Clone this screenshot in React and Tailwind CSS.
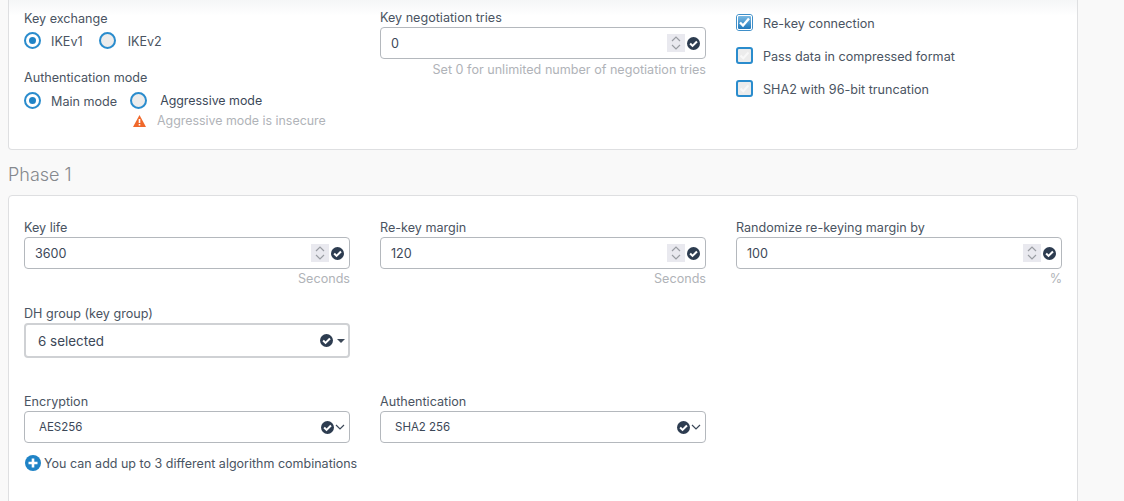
const labelCls = 'block text-[12.6px] leading-[18px] text-[#4a5462]';
const optionCls = 'translate-y-[1px] text-[12.6px] leading-4 text-[#4a5462]';
const hintCls = 'text-right text-[12.6px] leading-4 text-[#b0b3b8]';

function CheckBadge() {
  return (
    <svg width="13" height="13" viewBox="0 0 12 12" className="shrink-0">
      <circle cx="6" cy="6" r="6" fill="#2d3c50" />
      <path d="M2.9 6 5.1 8.2 9.2 4.1" fill="none" stroke="#fff" strokeWidth="1.9" />
    </svg>
  );
}

function Spinner() {
  return (
    <span className="flex h-[18px] w-[18px] items-center justify-center bg-[#e9e9ef]">
      <svg width="12" height="16" viewBox="0 0 12 16" fill="none" stroke="#9a9da3" strokeWidth="1.2">
        <path d="M2 6 6 2l4 4" />
        <path d="M2 10l4 4 4-4" />
      </svg>
    </span>
  );
}

function NumberField({ label, value, hint, hintGap = 'mt-[2px]' }) {
  return (
    <div>
      <label className={labelCls}>{label}</label>
      <div className="flex h-8 items-center rounded-[4px] border border-[#b4b8bd] bg-white pl-[10px] pr-[5px]">
        <span className="flex-1 translate-y-[1px] text-[12.6px] text-[#3c4858]">{value}</span>
        <Spinner />
        <span className="ml-[1px] flex w-[14px] justify-end"><CheckBadge /></span>
      </div>
      <div className={hintCls + ' ' + hintGap}>{hint}</div>
    </div>
  );
}

function SelectField({ label, value }) {
  return (
    <div>
      <label className={labelCls}>{label}</label>
      <div className="flex h-8 items-center rounded-[4px] border border-[#b4b8bd] bg-white pr-[4px]">
        <span className="flex-1 translate-y-[1px] pl-[14px] text-[11.5px] text-[#3c4858]">{value}</span>
        <CheckBadge />
        <svg width="10" height="6" viewBox="0 0 10 6" fill="none" stroke="#3c4858" strokeWidth="1.2" className="ml-[1px]">
          <path d="M1 1l4 4 4-4" />
        </svg>
      </div>
    </div>
  );
}

function Radio({ checked }) {
  return (
    <span className={'flex h-[17px] w-[17px] shrink-0 items-center justify-center rounded-full border-[2.5px] border-[#2a8ccd] ' + (checked ? 'bg-white' : 'bg-[#ececec]')}>
      {checked && <span className="h-[7px] w-[7px] rounded-full bg-[#1f83c6]" />}
    </span>
  );
}

function Checkbox({ checked, label }) {
  return (
    <div className="flex h-[17px] items-center gap-[10px]">
      {checked ? (
        <span className="flex h-[17px] w-[17px] shrink-0 rounded-[3px] border border-[#3f8fc9]">
          <span className="flex h-[15px] w-[15px] items-center justify-center rounded-[2px] border border-white bg-[linear-gradient(to_bottom,#79b9e3,#1f78bb)]">
            <svg width="13" height="13" viewBox="0 0 13 13"><path d="M2 6.5 5 9.5 11 2.5" fill="none" stroke="#fff" strokeWidth="2.4" /></svg>
          </span>
        </span>
      ) : (
        <span className="flex h-[17px] w-[17px] shrink-0 items-center justify-center rounded-[3px] border-[2px] border-[#2a8ccd] bg-[#ececec]">
          <svg width="11" height="11" viewBox="0 0 11 11"><path d="M1.5 5.5 4.2 8.2 9.5 2.5" fill="none" stroke="#f8f8f8" strokeWidth="2" /></svg>
        </span>
      )}
      <span className={optionCls}>{label}</span>
    </div>
  );
}

export default function App() {
  return (
    <div className="h-[501px] w-[1124px] overflow-hidden bg-[#f9f9f9] pl-2 font-['Inter','Liberation_Sans',sans-serif]">
      {/* top card, scrolled so its top edge is out of view */}
      <div className="h-[150px] w-[1070px] rounded-b-[4px] border-x border-b border-[#dedfe1] bg-[linear-gradient(to_bottom,#f5f6f7,#ffffff_16px)] px-[15px] pt-[9px]">
        <div className="grid grid-cols-[326px_326px_326px] gap-x-[30px]">
          <div className="pt-[1px]">
            <div className={labelCls}>Key exchange</div>
            <div className="mt-[4px] flex items-center">
              <Radio checked />
              <span className={'ml-[10px] ' + optionCls}>IKEv1</span>
              <span className="ml-[16px]"><Radio /></span>
              <span className={'ml-[12px] ' + optionCls}>IKEv2</span>
            </div>
            <div className={labelCls + ' mt-[20px]'}>Authentication mode</div>
            <div className="mt-[5px] flex items-center">
              <Radio checked />
              <span className={'ml-[10px] ' + optionCls}>Main mode</span>
              <span className="ml-[13px]"><Radio /></span>
              <span className="ml-[13px] text-[12.4px] leading-4 text-[#3c4858]">Aggressive mode</span>
            </div>
            <div className="ml-[109px] mt-[4px] flex items-center">
              <svg width="13" height="12" viewBox="0 0 13 12">
                <path d="M6.5 0 13 12H0Z" fill="#f0682a" />
                <path d="M6.5 4v4M6.5 9v1.6" stroke="#fff" strokeWidth="1.6" />
              </svg>
              <span className="ml-[11px] text-[12.4px] leading-4 text-[#b0b3b8]">Aggressive mode is insecure</span>
            </div>
          </div>
          <NumberField label="Key negotiation tries" value="0" hint="Set 0 for unlimited number of negotiation tries" hintGap="mt-[3px]" />
          <div className="flex flex-col gap-4 pt-[5px]">
            <Checkbox checked label="Re-key connection" />
            <Checkbox label="Pass data in compressed format" />
            <Checkbox label="SHA2 with 96-bit truncation" />
          </div>
        </div>
      </div>

      <h2 className="mt-[13px] text-[18px] font-light leading-6 text-[#85888d]">Phase 1</h2>

      <div className="mt-2 h-[320px] w-[1070px] rounded-t-[4px] border border-[#dedfe1] bg-white px-[15px] pt-[23px]">
        <div className="grid grid-cols-[326px_326px_326px] gap-x-[30px]">
          <NumberField label="Key life" value="3600" hint="Seconds" />
          <NumberField label="Re-key margin" value="120" hint="Seconds" />
          <NumberField label="Randomize re-keying margin by" value="100" hint="%" />
        </div>

        <div className="mt-[18px] w-[326px]">
          <label className={labelCls}>DH group (key group)</label>
          <div className="flex h-[35px] items-center rounded-[4px] border-[2px] border-[#cfd1d4] bg-white pl-[12px] pr-[3px]">
            <span className="flex-1 translate-y-[1px] text-[13.4px] text-[#3c4858]">6 selected</span>
            <CheckBadge />
            <span className="ml-[4px] h-0 w-0 border-x-[4px] border-t-[4px] border-x-transparent border-t-[#3c4858]" />
          </div>
        </div>

        <div className="mt-[35px] grid grid-cols-[326px_326px] gap-x-[30px]">
          <SelectField label="Encryption" value="AES256" />
          <SelectField label="Authentication" value="SHA2 256" />
        </div>

        <div className="mt-[12px] flex items-center">
          <svg width="16" height="16" viewBox="0 0 16 16" className="mb-[2px] ml-[1px] shrink-0">
            <circle cx="8" cy="8" r="8" fill="#1f83c6" />
            <path d="M8 3.5v9M3.5 8h9" stroke="#fff" strokeWidth="2.6" />
          </svg>
          <span className="ml-[3px] text-[12.5px] leading-4 text-[#4a5462]">You can add up to 3 different algorithm combinations</span>
        </div>
      </div>
    </div>
  );
}
